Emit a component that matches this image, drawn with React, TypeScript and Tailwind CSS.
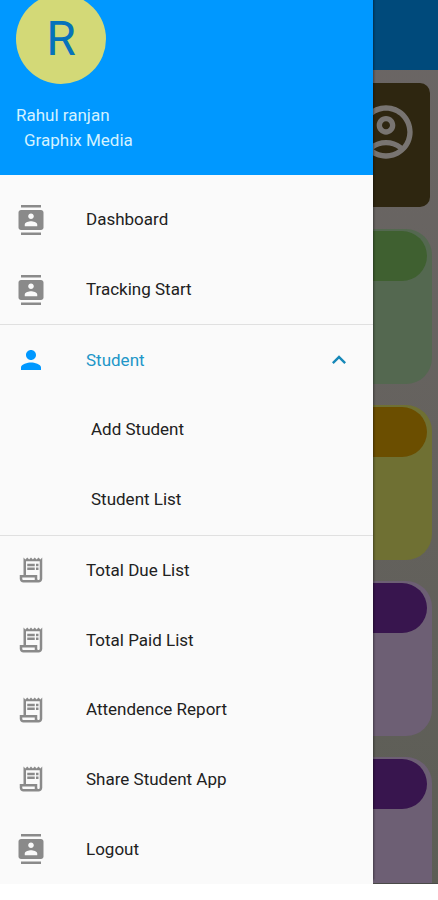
import React from "react";
import {
  MdContacts,
  MdExpandLess,
  MdOutlineAccountCircle,
  MdOutlineReceiptLong,
  MdPerson,
} from "react-icons/md";
import type { IconType } from "react-icons";

const tiles = [
  { card: "bg-[#546850]", pill: "bg-[#3f6030]" },
  { card: "bg-[#6f7033]", pill: "bg-[#6b4e00]" },
  { card: "bg-[#6d5f74]", pill: "bg-[#38154e]" },
  { card: "bg-[#6d5f74]", pill: "bg-[#38154e]" },
];

function NavItem({ icon: Icon, label }: { icon: IconType; label: string }) {
  return (
    <button type="button" className="flex min-h-12 grow basis-0 items-center pl-4 text-left">
      <Icon className="size-[30px] shrink-0 text-[#8a8a8a]" />
      <span className="ml-10">{label}</span>
    </button>
  );
}

function SubItem({ label }: { label: string }) {
  return (
    <button type="button" className="flex min-h-12 grow basis-0 items-center pl-[91px] text-left">
      {label}
    </button>
  );
}

function Dashboard() {
  return (
    <main className="absolute inset-0 flex flex-col overflow-hidden border-b border-[#4a4a48] bg-linear-to-b from-[#6b6665] via-[#65625e] to-[#5c5d55]">
      <div className="h-[70px] shrink-0 bg-[#004a7b]" />
      <div className="mx-2 mt-[13px] flex h-[124px] shrink-0 items-start justify-end rounded-[10px] bg-[#2e2610] pt-[17px] pr-3">
        <MdOutlineAccountCircle className="size-16 text-[#787471]" />
      </div>
      <div className="mx-1.5 mt-[22px] flex flex-col gap-[21px]">
        {tiles.map((tile, i) => (
          <div key={i} className={`h-[155px] shrink-0 rounded-[26px] px-[5px] pt-0.5 ${tile.card}`}>
            <div className={`h-[50px] rounded-full ${tile.pill}`} />
          </div>
        ))}
      </div>
    </main>
  );
}

export default function App() {
  return (
    <div className="flex min-h-screen flex-col bg-white pb-4 font-[Roboto,'Liberation_Sans',sans-serif] text-[17px] leading-[25px] text-[#212121]">
      <div className="relative flex flex-1 flex-col">
        <Dashboard />
        <aside className="relative flex w-[373px] max-w-full flex-1 flex-col bg-[#fafafa] shadow-[1px_-4px_2px_rgba(0,0,0,0.4)]">
          <header className="flex h-[175px] shrink-0 flex-col overflow-hidden bg-[#0098ff] px-4 text-[#d3f2ff]">
            <div className="-mt-1.5 flex size-[90px] shrink-0 items-center justify-center rounded-full bg-[#d3d977] text-5xl text-[#0672bb]">
              R
            </div>
            <p className="mt-[19px]">Rahul ranjan</p>
            <p className="ml-2">Graphix Media</p>
          </header>
          <nav aria-label="Main menu" className="flex flex-1 flex-col pt-2.5">
            <NavItem icon={MdContacts} label="Dashboard" />
            <NavItem icon={MdContacts} label="Tracking Start" />
            <hr className="border-[#e0e0e0]" />
            <button
              type="button"
              aria-expanded="true"
              className="flex min-h-12 grow basis-0 items-center pr-5 pl-4 text-left text-[#2196c8]"
            >
              <MdPerson className="size-[30px] shrink-0 text-[#0098ff]" />
              <span className="ml-10 flex-1">Student</span>
              <MdExpandLess className="size-7 text-[#1688b8]" />
            </button>
            <SubItem label="Add Student" />
            <SubItem label="Student List" />
            <hr className="border-[#e0e0e0]" />
            <NavItem icon={MdOutlineReceiptLong} label="Total Due List" />
            <NavItem icon={MdOutlineReceiptLong} label="Total Paid List" />
            <NavItem icon={MdOutlineReceiptLong} label="Attendence Report" />
            <NavItem icon={MdOutlineReceiptLong} label="Share Student App" />
            <NavItem icon={MdContacts} label="Logout" />
          </nav>
        </aside>
      </div>
    </div>
  );
}
